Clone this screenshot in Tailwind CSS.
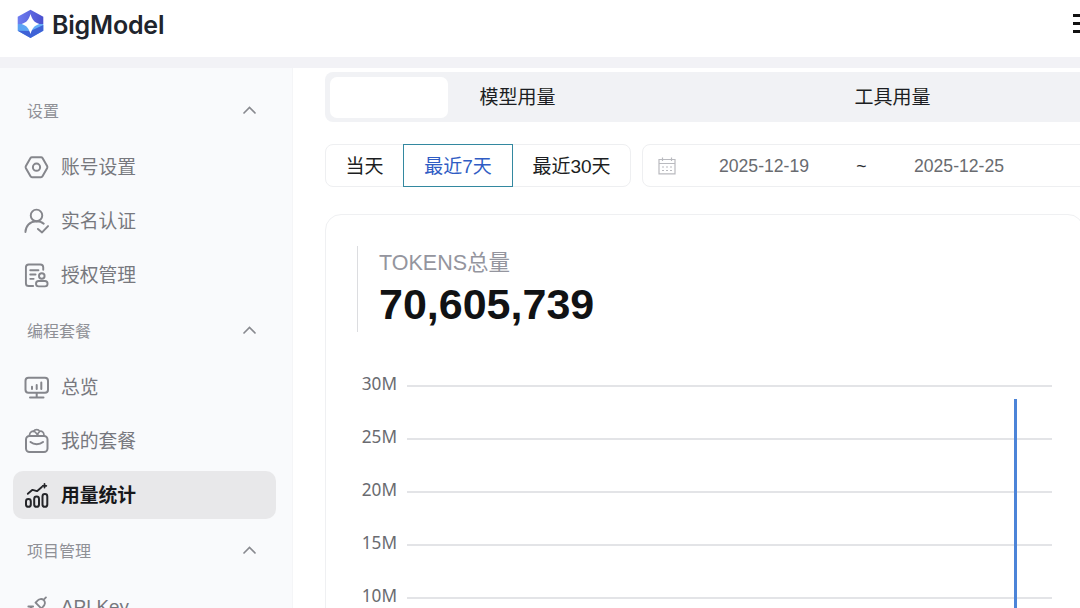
<!DOCTYPE html>
<html lang="zh-CN">

<head>
  <meta charset="UTF-8" />
  <meta name="viewport" content="width=device-width, initial-scale=1.0" />
  <title>BigModel 用量统计</title>
  <script src="https://cdn.jsdelivr.net/npm/@tailwindcss/browser@4"></script>
</head>

<body class="w-[1080px] h-[608px] overflow-hidden flex flex-col bg-white font-['Liberation_Sans','Noto_Sans_CJK_SC',sans-serif] text-[#1c1e22]">
  <header class="h-[57px] shrink-0 bg-white flex items-start justify-between pl-[17px]">
    <div class="flex items-center gap-[8px] pt-[8px]">
      <svg class="w-[27px] h-[30px]" viewBox="0 0 27 30">
        <defs>
          <linearGradient id="top" x1="0" x2="1"><stop stop-color="#6f7df0" /><stop offset="1" stop-color="#4a50cf" /></linearGradient>
          <linearGradient id="bottom" x1="0" x2="1"><stop stop-color="#5aa2f2" /><stop offset="1" stop-color="#69b2fa" /></linearGradient>
        </defs>
        <path fill="url(#top)" d="M13.5.8 26.300 7.800V15H.7V7.800z" />
        <path fill="url(#bottom)" d="M.7 15h25.600v6.800L13.500 29 .7 21.800z" />
        <path fill="#3f62d6" d="M.7 21.800 13.500 22l12.800-6v5.800L13.500 29z" />
        <path fill="#fff" d="M13.500 5c1.700 6 3.800 8.300 8.800 10-5 1.700-7.100 4-8.800 10-1.700-6-3.800-8.300-8.800-10 5-1.700 7.100-4 8.800-10z" />
      </svg>
      <span class="pt-[2px] font-[Inter] font-semibold text-[25px] leading-[30px] tracking-[-0.2px] text-[#20242c]">BigModel</span>
    </div>
    <div class="w-[7px] mt-[14px] flex flex-col gap-[5px]">
      <span class="h-[3px] bg-[#111]"></span>
      <span class="h-[3px] bg-[#111]"></span>
      <span class="h-[3px] bg-[#111]"></span>
    </div>
  </header>
  <div class="h-[11px] shrink-0 bg-[#f2f2f6]"></div>

  <div class="flex flex-1 min-h-0">
    <aside class="w-[293px] shrink-0 bg-[#f9fafc] border-r border-[#f4f5f7] pt-[14px] px-[13px] text-[18.8px] text-[#77787e] overflow-hidden">
      <div class="h-[58px] pb-[2px] pl-[14px] pr-[22px] flex items-center justify-between text-[16px] text-[#8f9096]">
        <span class="pt-[3px]">设置</span>
        <svg class="w-[15px] h-[9px]" viewBox="0 0 15 9" fill="none" stroke="#88898f" stroke-width="1.6"><path d="M1.5 7.500 7.500 1.500l6 6" /></svg>
      </div>
      <div class="h-[54px] pl-[11px] flex items-center gap-[12px]">
        <svg class="w-[25px] h-[26px]" viewBox="0 0 25 26" fill="none" stroke="#85868c" stroke-width="2" stroke-linejoin="round">
          <path d="M8 3.200h9q1 0 1.500.9l4.600 8q.6 1.100 0 2.200l-4.600 8q-.5.9-1.500.9H8q-1 0-1.500-.9l-4.600-8q-.6-1.100 0-2.200l4.600-8Q7 3.200 8 3.200z" />
          <circle cx="12.500" cy="13.200" r="3.600" />
        </svg>
        <span class="pt-[2px]">账号设置</span>
      </div>
      <div class="h-[54px] pl-[11px] flex items-center gap-[12px]">
        <svg class="w-[25px] h-[26px]" viewBox="0 0 26 26" fill="none" stroke="#85868c" stroke-width="2" stroke-linecap="round" stroke-linejoin="round">
          <circle cx="13" cy="7.200" r="6" />
          <path d="M1.500 24.500c.2-6.200 4.300-11 11.500-11.300M13 13.200c3.300 0 5.800 1 7.500 2.600M14.500 21.300l4.300 3.600 6.200-6.600" />
        </svg>
        <span class="pt-[2px]">实名认证</span>
      </div>
      <div class="h-[54px] pl-[11px] flex items-center gap-[12px]">
        <svg class="w-[25px] h-[26px]" viewBox="0 0 26 26" fill="none" stroke="#85868c" stroke-width="2" stroke-linecap="round" stroke-linejoin="round">
          <path d="M9.500 24.500H5q-3 0-3-3V5q0-3 3-3h12q3 0 3 3v2.500M6.500 8h8.500M6.500 12.500h5.500M6.500 17h3.500" />
          <circle cx="18.500" cy="14" r="2.900" />
          <rect x="12.500" y="19.300" width="12" height="5.500" rx="2.700" />
        </svg>
        <span class="pt-[2px]">授权管理</span>
      </div>

      <div class="h-[58px] pb-[2px] pl-[14px] pr-[22px] flex items-center justify-between text-[16px] text-[#8f9096]">
        <span class="pt-[3px]">编程套餐</span>
        <svg class="w-[15px] h-[9px]" viewBox="0 0 15 9" fill="none" stroke="#88898f" stroke-width="1.6"><path d="M1.5 7.500 7.500 1.500l6 6" /></svg>
      </div>
      <div class="h-[54px] pl-[11px] flex items-center gap-[12px]">
        <svg class="w-[25px] h-[26px]" viewBox="0 0 25 26" fill="none" stroke="#85868c" stroke-width="2" stroke-linecap="round">
          <rect x="1.500" y="3.800" width="22.500" height="15" rx="3" />
          <path d="M8 12.800v2.200M12.700 11V15M17.300 8.500V15M12.700 19v4M6 23.500h13.500" />
        </svg>
        <span class="pt-[2px]">总览</span>
      </div>
      <div class="h-[54px] pl-[11px] flex items-center gap-[12px]">
        <svg class="w-[25px] h-[26px]" viewBox="0 0 25 26" fill="none" stroke="#85868c" stroke-width="2" stroke-linecap="round" stroke-linejoin="round">
          <rect x="2" y="8" width="21.500" height="16" rx="3.500" />
          <path d="M6.500 14c3.500 3 9 3 12.500 0" />
          <path stroke-width="1.700" d="M5.500 7c.2-3 3-4.500 5-3.500l3.500 3.300M9.500 3.500c1.500-2.500 5-2.500 6.200 0L13 6.500M15.500 3.300c2.500-.8 4.300 1 4.500 3.700" />
        </svg>
        <span class="pt-[2px]">我的套餐</span>
      </div>
      <div class="h-[48px] my-[3px] pl-[11px] w-[263px] flex items-center gap-[12px] bg-[#e8e8ea] rounded-[10px] text-[#17181b] font-bold">
        <svg class="w-[25px] h-[26px]" viewBox="0 0 25 26" fill="none" stroke="#242529" stroke-width="2" stroke-linecap="round" stroke-linejoin="round">
          <rect x="2" y="17" width="4.800" height="7.800" rx="2.400" />
          <rect x="10.200" y="14.500" width="4.800" height="10.300" rx="2.400" />
          <rect x="18.500" y="12" width="4.800" height="12.800" rx="2.400" />
          <path stroke-width="1.800" d="M3.800 11.800 8.500 7.800l4.500 1.400 4.800-4.200M20.500 2v3.600M18.700 3.800h3.600" />
        </svg>
        <span class="pt-[2px]">用量统计</span>
      </div>

      <div class="h-[58px] pb-[2px] pl-[14px] pr-[22px] flex items-center justify-between text-[16px] text-[#8f9096]">
        <span class="pt-[3px]">项目管理</span>
        <svg class="w-[15px] h-[9px]" viewBox="0 0 15 9" fill="none" stroke="#88898f" stroke-width="1.6"><path d="M1.5 7.500 7.500 1.500l6 6" /></svg>
      </div>
      <div class="h-[54px] pl-[11px] flex items-center gap-[12px]">
        <svg class="w-[25px] h-[26px]" viewBox="0 0 26 26" fill="none" stroke="#85868c" stroke-width="1.9" stroke-linecap="round" stroke-linejoin="round">
          <path d="M22.800 3l-2 2M13.500 7c2-2.500 5-3 7-1.200 2 2 1.500 5-.8 7l-1.700 1.700-6-6zM4.500 12.500h5M6 12.500l7.500 7.500M7.500 14c-2.500 2-3 5-1.500 6.500s4.500 1 6.500-1.500M6 20.500 3 23.500" />
        </svg>
        <span>API Key</span>
      </div>
    </aside>

    <main class="flex-1 min-w-0 overflow-hidden pl-[32px] pt-[4px]">
      <div class="w-[1128px] h-[50px] rounded-[8px] bg-[#f1f2f5] p-[5px] flex items-center text-[19px]">
        <div class="w-[118px] h-[41px] rounded-[7px] bg-white"></div>
        <div class="w-[139px] pt-[2px] text-center">模型用量</div>
        <div class="w-[611px] pt-[2px] text-center">工具用量</div>
      </div>

      <div class="mt-[22px] h-[43px] w-[1128px] flex items-start gap-[11px]">
        <div class="h-[43px] w-[306px] shrink-0 rounded-[8px] border border-[#eeeff1] flex items-center text-[19px]">
          <span class="w-[77px] pt-[3px] text-center">当天</span>
          <span class="w-[110px] h-[43px] pt-[3px] shrink-0 border border-[#3388a0] text-[#2f5cc4] flex items-center justify-center">最近7天</span>
          <span class="flex-1 pt-[3px] text-center">最近30天</span>
        </div>
        <div class="h-[43px] flex-1 rounded-[8px] border border-[#eeeff1] flex items-center pl-[15px] text-[17.6px] text-[#696b70] whitespace-nowrap">
          <svg class="w-[18px] h-[18px]" viewBox="0 0 18 18" fill="none" stroke="#b9babf" stroke-width="1.2">
            <path d="M1 2.500h16v14.300H1zM1 6.500h16M4.500.5v3.500M13.500.5v3.500M4 10h2M8 10h2M12 10h2M4 13.500h2M8 13.500h2M12 13.500h2" />
          </svg>
          <span class="ml-[43px] w-[90px] pt-[1px]">2025-12-19</span>
          <span class="w-[105px] pt-[1px] text-center text-[#2b2d31]">~</span>
          <span class="pt-[1px]">2025-12-25</span>
        </div>
      </div>

      <section class="mt-[27px] w-[759px] h-[600px] rounded-[16px] border border-[#eff0f2] pt-[31px] pl-[31px]">
        <div class="h-[86px] border-l border-[#dcdde0] pl-[21px]">
          <div class="pt-[1px] text-[21.5px] leading-[32px] text-[#94959e]">TOKENS总量</div>
          <div class="text-[43px] leading-[50px] font-bold text-[#111214]">70,605,739</div>
        </div>

        <div class="relative mt-[27px] w-[695px] pl-[4px] font-['Noto_Sans'] text-[17.2px] text-[#6a6b70]">
          <div class="h-[53px] flex items-center gap-[10px]"><span class="w-[36px] -mt-[4px] text-right">30M</span><span class="flex-1 h-[2px] bg-[#e3e4e7]"></span></div>
          <div class="h-[53px] flex items-center gap-[10px]"><span class="w-[36px] -mt-[4px] text-right">25M</span><span class="flex-1 h-[2px] bg-[#e3e4e7]"></span></div>
          <div class="h-[53px] flex items-center gap-[10px]"><span class="w-[36px] -mt-[4px] text-right">20M</span><span class="flex-1 h-[2px] bg-[#e3e4e7]"></span></div>
          <div class="h-[53px] flex items-center gap-[10px]"><span class="w-[36px] -mt-[4px] text-right">15M</span><span class="flex-1 h-[2px] bg-[#e3e4e7]"></span></div>
          <div class="h-[53px] flex items-center gap-[10px]"><span class="w-[36px] -mt-[4px] text-right">10M</span><span class="flex-1 h-[2px] bg-[#e3e4e7]"></span></div>
          <!-- token spike -->
          <div class="absolute left-[657px] top-[40px] w-[3px] h-[300px] bg-[#4c84d8]"></div>
        </div>
      </section>
    </main>
  </div>
</body>

</html>
